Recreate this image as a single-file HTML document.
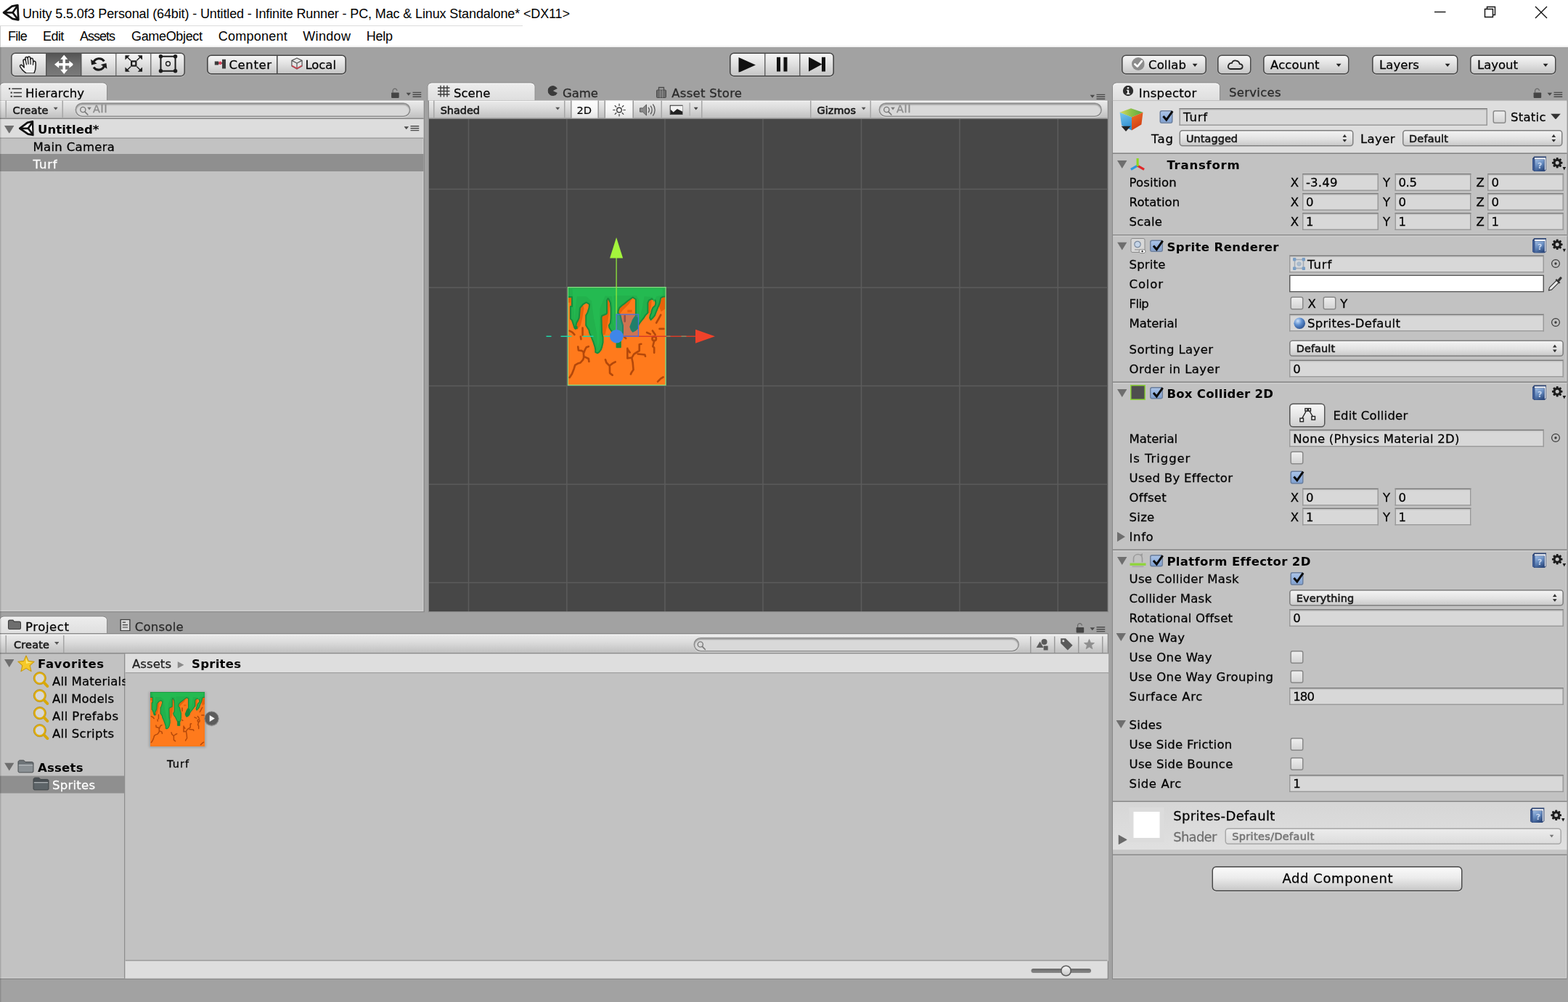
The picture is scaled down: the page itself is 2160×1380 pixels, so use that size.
<!DOCTYPE html>
<html lang="en"><head><meta charset="utf-8"><title>Unity 5.5.0f3 Personal (64bit) - Untitled - Infinite Runner</title>
<style>
html,body{margin:0;padding:0;background:#a2a2a2;overflow:hidden;}
body{width:2160px;height:1380px;position:relative;}
#chrome{position:absolute;left:0;top:0;width:2160px;height:65px;background:#fff;overflow:hidden;}
#u{position:absolute;left:0;top:65px;width:1440px;height:876.66px;transform:scale(1.5);transform-origin:0 0;background:#a2a2a2;overflow:hidden;}
.a{position:absolute;box-sizing:border-box;}
.t{font-family:"DejaVu Sans","Liberation Sans",sans-serif;font-size:11px;line-height:16px;color:#000;white-space:nowrap;-webkit-text-stroke:0.18px currentColor;}
.lb{font-family:"Liberation Sans",sans-serif;-webkit-text-stroke:0;}
.b{font-weight:bold;-webkit-text-stroke:0;}
.s{font-size:9.6px;color:#1a1a1a;-webkit-text-stroke:0.42px currentColor;}
.tab{background:linear-gradient(#ededed,#dedede);border-radius:3.5px 3.5px 0 0;box-shadow:inset 0 0.7px 0 rgba(255,255,255,0.8), 0 0 0 0.6px rgba(110,110,110,0.45);}
.ptb{background:linear-gradient(#ebebeb 0%,#dddddd 40%,#c0c0c0 100%);border-bottom:1px solid #8a8a8a;box-shadow:inset 0 1px 0 rgba(255,255,255,0.6);}
.fld{background:#d8d8d8;border:1px solid #9a9a9a;border-top-color:#7a7a7a;box-shadow:inset 0 1px 0 rgba(0,0,0,0.08);}
.dd{background:linear-gradient(#f4f4f4,#e2e2e2 55%,#cacaca);border:1px solid #808080;border-radius:3px;}
.cb{background:linear-gradient(#eeeeee,#d4d4d4);border:1px solid #8a8a8a;border-radius:2px;}
.cbc{background:linear-gradient(#a9c3e8,#7fa0d0);border:1px solid #6a7f9f;border-radius:2px;}

</style></head>
<body>
<div id="u">
<div class="a" style="left:0px;top:0px;width:1440px;height:877px;background:#a2a2a2;"></div>
<div class="a" style="left:10px;top:5px;width:160px;height:22px;border-radius:4px;border:1px solid #4d4d4d;overflow:hidden;background:linear-gradient(#f6f6f6,#e2e2e2 45%,#c6c6c6);box-shadow:0 0.7px 0 rgba(255,255,255,0.35);"><div class="a" style="left:31px;top:0;width:32px;height:100%;background:linear-gradient(#555,#6e6e6e 50%,#7a7a7a);"></div><div class="a" style="left:31px;top:0;width:1px;height:100%;background:#555;"></div><div class="a" style="left:63px;top:0;width:1px;height:100%;background:#555;"></div><div class="a" style="left:95px;top:0;width:1px;height:100%;background:#777;"></div><div class="a" style="left:127px;top:0;width:1px;height:100%;background:#777;"></div></div>
<svg class="a" style="left:17.33px;top:7.67px;" width="17.33" height="16.67" viewBox="0 0 23.5 24.6"><path d="M9.4 23.6 C6 21 2.6 17.4 1.2 14.6 C0.4 12.8 2.4 11.4 3.8 12.8 L6.6 15.8 L5.4 6.6 C5.2 4.4 8 3.8 8.6 6 L8.2 3.4 C8 1.2 11 0.8 11.4 3 L11.6 2.4 C11.8 0.4 14.8 0.6 15 2.8 L15.2 4.4 C15.6 2.6 18.4 3 18.6 5 L19 8 C19.4 6.6 22 7 22.2 8.8 C22.6 13.4 22.4 18.6 20 23.6 Z" fill="#f2f2f2" stroke="#1e1e1e" stroke-width="1.5" stroke-linejoin="round"/><path d="M8.6 6 L9.8 11.6 M11.5 3 L12.4 11 M15.1 4.4 L15.4 11.2 M18.9 8 L18.6 12" fill="none" stroke="#1e1e1e" stroke-width="1.3" stroke-linecap="round"/></svg>
<svg class="a" style="left:49.67px;top:7px;" width="17.67" height="17.67" viewBox="0 0 24 24"><g fill="#fff"><path d="M12 0 L16.6 5.6 H13.6 V10.4 H18.4 V7.4 L24 12 L18.4 16.6 V13.6 H13.6 V18.4 H16.6 L12 24 L7.4 18.4 H10.4 V13.6 H5.6 V16.6 L0 12 L5.6 7.4 V10.4 H10.4 V5.6 H7.4 Z"/></g></svg>
<svg class="a" style="left:83px;top:7.67px;" width="15.67" height="15" viewBox="0 0 24 22"><g fill="none" stroke="#1c1c1c" stroke-width="3.1"><path d="M4.2 9 A8.6 8.6 0 0 1 19.4 7"/><path d="M19.8 13 A8.6 8.6 0 0 1 4.6 15.4"/></g><path d="M0.6 4.4 L1.6 12.4 L9.4 10.2 Z" fill="#1c1c1c"/><path d="M23.4 17.6 L22.4 9.6 L14.6 11.8 Z" fill="#1c1c1c"/></svg>
<svg class="a" style="left:113.67px;top:7.33px;" width="17.67" height="16" viewBox="0 0 26 24.8"><g stroke="#1c1c1c" fill="none"><rect x="9.8" y="9.2" width="6.4" height="6.4" stroke-width="2.3"/><path d="M8.6 8 L3.6 3.2 M17.4 8 L22.4 3.2 M8.6 16.8 L3.6 21.6 M17.4 16.8 L22.4 21.6" stroke-width="1.5"/></g><g fill="#1c1c1c"><path d="M0.8 0.8 H7.4 L0.8 7.2 Z M25.2 0.8 V7.2 L18.6 0.8 Z M0.8 24 V17.6 L7.4 24 Z M25.2 24 H18.6 L25.2 17.6 Z"/></g></svg>
<svg class="a" style="left:145.33px;top:6.33px;" width="18.67" height="18.33" viewBox="0 0 26 26"><g stroke="#1c1c1c" fill="none"><rect x="3.5" y="3.5" width="19" height="19" stroke-width="1.9"/><circle cx="13" cy="13" r="2.8" stroke-width="1.3"/></g><g fill="#1c1c1c"><circle cx="3.5" cy="3.5" r="2.6"/><circle cx="22.5" cy="3.5" r="2.6"/><circle cx="3.5" cy="22.5" r="2.6"/><circle cx="22.5" cy="22.5" r="2.6"/></g></svg>
<div class="a" style="left:190px;top:7px;width:128px;height:18px;border-radius:4px;border:1px solid #444;background:linear-gradient(#f6f6f6,#e2e2e2 45%,#c6c6c6);box-shadow:0 0.7px 0 rgba(255,255,255,0.35);"><div class="a" style="left:63px;top:0;width:1px;height:100%;background:#444;"></div></div>
<svg class="a" style="left:197.33px;top:11.33px;" width="10.67" height="9.33" viewBox="0 0 16 14"><g fill="#3a3a3a"><rect x="0" y="3" width="5.5" height="5" /><rect x="10.5" y="0" width="5" height="13"/><rect x="5" y="4.6" width="6" height="1.6"/></g><rect x="6" y="3.2" width="3.6" height="4.2" fill="#e0405a"/></svg>
<div class="a t" style="left:210.33px;top:9px;letter-spacing:0.391px;">Center</div>
<svg class="a" style="left:266.67px;top:9.33px;" width="11.33" height="12" viewBox="0 0 18 18"><g fill="#e6e6e6" stroke="#555" stroke-width="1.3" stroke-linejoin="round"><path d="M9 1 L16.5 4.6 V12.6 L9 17 L1.5 12.6 V4.6 Z"/><path d="M1.5 4.6 L9 8.4 L16.5 4.6 M9 8.4 V17" fill="none"/></g><path d="M2.2 11.8 L9 15.6 L15.8 11.8 V13 L9 16.8 L2.2 13 Z" fill="#d0404e" stroke="#d0404e" stroke-width="0.8"/></svg>
<div class="a t" style="left:280.33px;top:9px;letter-spacing:-0.046px;">Local</div>
<div class="a" style="left:670px;top:5px;width:96px;height:22px;border-radius:4px;border:1px solid #444;background:linear-gradient(#f6f6f6,#e2e2e2 45%,#c6c6c6);box-shadow:0 0.7px 0 rgba(255,255,255,0.35);"><div class="a" style="left:31px;top:0;width:1px;height:100%;background:#666;"></div><div class="a" style="left:63px;top:0;width:1px;height:100%;background:#666;"></div></div>
<svg class="a" style="left:678px;top:8.67px;" width="16.67" height="14.67" viewBox="0 0 24 21"><path d="M0.5 0.5 L23 10.5 L0.5 20.5 Z" fill="#111"/></svg>
<svg class="a" style="left:713.33px;top:9.33px;" width="10.67" height="13.33" viewBox="0 0 16 20"><rect x="0.5" y="0" width="5" height="20" fill="#111"/><rect x="10" y="0" width="5" height="20" fill="#111"/></svg>
<svg class="a" style="left:742px;top:9.33px;" width="17.33" height="13.33" viewBox="0 0 25 20"><path d="M0.5 0 L19 10 L0.5 20 Z" fill="#111"/><rect x="18.5" y="0" width="5" height="20" fill="#111"/></svg>
<div class="a" style="left:1030px;top:7px;width:78px;height:18px;border-radius:4px;border:1px solid #4a4a4a;background:linear-gradient(#f6f6f6,#e2e2e2 45%,#c6c6c6);box-shadow:0 0.7px 0 rgba(255,255,255,0.35);"></div>
<div class="a t" style="left:1054.67px;top:9px;letter-spacing:0.086px;">Collab</div>
<svg class="a" style="left:1095.27px;top:14.87px;" width="4.8" height="2.93" viewBox="0 0 7.2 4.4"><path d="M0 0 H7.2 L3.6 4.4 Z" fill="#222"/></svg>
<svg class="a" style="left:1038.67px;top:9.33px;" width="12.67" height="12.67" viewBox="0 0 19 19"><circle cx="9.5" cy="9.5" r="9" fill="#8c8c8c"/><path d="M4.8 9.8 L8.3 13.2 L14.4 5.6" fill="none" stroke="#fff" stroke-width="2.6" stroke-linecap="round" stroke-linejoin="round"/></svg>
<div class="a" style="left:1118px;top:7px;width:31px;height:18px;border-radius:4px;border:1px solid #4a4a4a;background:linear-gradient(#f6f6f6,#e2e2e2 45%,#c6c6c6);box-shadow:0 0.7px 0 rgba(255,255,255,0.35);"></div>
<svg class="a" style="left:1126px;top:11px;" width="16" height="10" viewBox="0 0 24 15"><path d="M6 13.5 H18.5 C24 13.5 24 6.8 18.6 6.6 C18 1.2 9.6 0.2 8 5.4 C3.5 4.2 0 13 6 13.5 Z" fill="none" stroke="#222" stroke-width="1.8" stroke-linejoin="round"/></svg>
<div class="a" style="left:1160px;top:7px;width:79px;height:18px;border-radius:4px;border:1px solid #4a4a4a;background:linear-gradient(#f6f6f6,#e2e2e2 45%,#c6c6c6);box-shadow:0 0.7px 0 rgba(255,255,255,0.35);"></div>
<div class="a t" style="left:1166.67px;top:9px;letter-spacing:0.098px;">Account</div>
<svg class="a" style="left:1226.93px;top:14.87px;" width="4.8" height="2.93" viewBox="0 0 7.2 4.4"><path d="M0 0 H7.2 L3.6 4.4 Z" fill="#222"/></svg>
<div class="a" style="left:1260px;top:7px;width:79px;height:18px;border-radius:4px;border:1px solid #4a4a4a;background:linear-gradient(#f6f6f6,#e2e2e2 45%,#c6c6c6);box-shadow:0 0.7px 0 rgba(255,255,255,0.35);"></div>
<div class="a t" style="left:1266.67px;top:9px;letter-spacing:0.051px;">Layers</div>
<svg class="a" style="left:1326.93px;top:14.87px;" width="4.8" height="2.93" viewBox="0 0 7.2 4.4"><path d="M0 0 H7.2 L3.6 4.4 Z" fill="#222"/></svg>
<div class="a" style="left:1350px;top:7px;width:79px;height:18px;border-radius:4px;border:1px solid #4a4a4a;background:linear-gradient(#f6f6f6,#e2e2e2 45%,#c6c6c6);box-shadow:0 0.7px 0 rgba(255,255,255,0.35);"></div>
<div class="a t" style="left:1356.67px;top:9px;letter-spacing:-0.013px;">Layout</div>
<svg class="a" style="left:1416.93px;top:14.87px;" width="4.8" height="2.93" viewBox="0 0 7.2 4.4"><path d="M0 0 H7.2 L3.6 4.4 Z" fill="#222"/></svg>
<div class="a tab" style="left:0px;top:32.8px;width:98px;height:15.87px;"></div>
<svg class="a" style="left:8px;top:36.67px;" width="12" height="9.33" viewBox="0 0 18 14"><g fill="#3c3c3c"><rect x="0" y="0.6" width="2.2" height="2.2"/><rect x="4.4" y="1" width="13.6" height="1.5"/><rect x="2.6" y="6" width="2.2" height="2.2"/><rect x="6.6" y="6.4" width="11.4" height="1.5"/><rect x="2.6" y="11.2" width="2.2" height="2.2"/><rect x="6.6" y="11.6" width="11.4" height="1.5"/></g></svg>
<div class="a t" style="left:23.33px;top:35px;letter-spacing:0.105px;">Hierarchy</div>
<svg class="a" style="left:359.33px;top:37.33px;" width="8.67" height="10" viewBox="0 0 13 15"><path d="M2.6 7 V4.6 C2.6 0.6 8.4 0.6 8.4 4.6" fill="none" stroke="#6a6a6a" stroke-width="1.3"/><rect x="0.6" y="7" width="10.6" height="7.4" rx="0.8" fill="#454545"/></svg>
<svg class="a" style="left:372.53px;top:41.47px;" width="14" height="5.33" viewBox="0 0 21 8"><path d="M0 1.2 H6.6 L3.3 5.2 Z" fill="#4a4a4a"/><g fill="#4a4a4a"><rect x="9" y="0" width="12" height="1.5"/><rect x="9" y="3" width="12" height="1.5"/><rect x="9" y="6" width="12" height="1.5"/></g></svg>
<div class="a" style="left:-1px;top:48.67px;width:390.67px;height:470px;background:#c2c2c2;border:1px solid #8a8a8a;box-shadow:inset -1px -1px 0 rgba(255,255,255,0.22);"></div>
<div class="a ptb" style="left:0px;top:49.47px;width:388.93px;height:16.67px;"></div>
<div class="a" style="left:5px;top:49px;width:1px;height:16px;background:#a6a6a6;"></div>
<div class="a" style="left:57px;top:49px;width:1px;height:16px;background:#a6a6a6;"></div>
<div class="a t s" style="left:11.67px;top:50px;letter-spacing:0.154px;font-size:9.6px;">Create</div>
<svg class="a" style="left:49.17px;top:55.33px;" width="4.33" height="2.67" viewBox="0 0 6.5 4"><path d="M0 0 H6.5 L3.25 4 Z" fill="#555"/></svg>
<div class="a" style="left:69px;top:51px;width:308px;height:13px;border-radius:20px;background:#d9d9d9;border:0.9px solid #8c8c8c;box-shadow:inset 0 1px 1px rgba(0,0,0,0.28), 0 0.7px 0 rgba(255,255,255,0.5);"></div>
<svg class="a" style="left:72.67px;top:53.67px;" width="9.33" height="9.33" viewBox="0 0 14 14"><circle cx="4.8" cy="5" r="3.6" fill="none" stroke="#7a7a7a" stroke-width="1.4"/><path d="M7.4 7.8 L11.4 12" stroke="#7a7a7a" stroke-width="1.7" stroke-linecap="round"/></svg>
<svg class="a" style="left:80.33px;top:55.47px;" width="4" height="2.67" viewBox="0 0 6 4"><path d="M0 0 H6 L3.0 4 Z" fill="#7a7a7a"/></svg>
<div class="a t" style="left:85.33px;top:49px;letter-spacing:0.515px;font-size:9.6px;color:#8c8c8c;-webkit-text-stroke:0.25px #8c8c8c;">All</div>
<div class="a" style="left:0px;top:66px;width:389px;height:18px;background:#dddddd;border-bottom:1px solid #a0a0a0;"></div>
<svg class="a" style="left:4.33px;top:71.67px;" width="9" height="7.33" viewBox="0 0 13.5 11"><path d="M0 0 H13.5 L6.75 11 Z" fill="#6e6e6e"/></svg>
<svg class="a" style="left:16.67px;top:67px;" width="14.67" height="14.67" viewBox="0 0 24 24"><g fill="none" stroke="#111" stroke-width="3" stroke-linejoin="round" stroke-linecap="round"><path d="M2 12.3 L13.5 3.6 L21.3 2 L22.3 22.3 L14.3 20.8 Z" fill="#fff"/><path d="M2.5 12.3 H14.5 M14.5 12.3 L21 3 M14.5 12.3 L21.6 21.6"/></g></svg>
<div class="a t b" style="left:34.67px;top:68px;letter-spacing:0.053px;">Untitled*</div>
<svg class="a" style="left:370.67px;top:72px;" width="14" height="5.33" viewBox="0 0 21 8"><path d="M0 1.2 H6.6 L3.3 5.2 Z" fill="#4a4a4a"/><g fill="#4a4a4a"><rect x="9" y="0" width="12" height="1.5"/><rect x="9" y="3" width="12" height="1.5"/><rect x="9" y="6" width="12" height="1.5"/></g></svg>
<div class="a t" style="left:30.33px;top:84px;letter-spacing:0.207px;">Main Camera</div>
<div class="a" style="left:0px;top:98px;width:389px;height:16px;background:#8f8f8f;"></div>
<div class="a t" style="left:30.39px;top:100px;letter-spacing:0.542px;color:#fff;">Turf</div>
<div class="a tab" style="left:392.8px;top:32.8px;width:98.53px;height:15.87px;"></div>
<svg class="a" style="left:402px;top:35.33px;" width="11.33" height="10.67" viewBox="0 0 17 16"><g stroke="#3c3c3c" stroke-width="1.4" fill="none"><path d="M4 0 V16 M8.5 0 V16 M13 0 V16 M0 3.5 H17 M0 8 H17 M0 12.5 H17"/></g></svg>
<div class="a t" style="left:416.67px;top:35px;letter-spacing:0.029px;">Scene</div>
<svg class="a" style="left:502.67px;top:35.33px;" width="9.33" height="10" viewBox="0 0 14 15"><path d="M7.2 7.5 L13.4 4.6 A7 7 0 1 0 13.4 10.4 Z" fill="#3a3a3a"/></svg>
<div class="a t" style="left:516.67px;top:35px;letter-spacing:-0.029px;color:#2a2a2a;">Game</div>
<svg class="a" style="left:602px;top:34.67px;" width="11.33" height="12" viewBox="0 0 17 18"><g fill="#6c6c6c" stroke="#4a4a4a" stroke-width="1"><rect x="1.5" y="6.5" width="13" height="10.5" rx="1"/><path d="M4.5 6.5 V3 H11.5 V6.5" fill="none" stroke-width="1.3"/></g><path d="M6.4 6.5 V17 M9.6 6.5 V17" stroke="#9a9a9a" stroke-width="0.8"/></svg>
<div class="a t" style="left:616.87px;top:35px;letter-spacing:0.182px;color:#2a2a2a;">Asset Store</div>
<svg class="a" style="left:1000.67px;top:43px;" width="14" height="5.33" viewBox="0 0 21 8"><path d="M0 1.2 H6.6 L3.3 5.2 Z" fill="#4a4a4a"/><g fill="#4a4a4a"><rect x="9" y="0" width="12" height="1.5"/><rect x="9" y="3" width="12" height="1.5"/><rect x="9" y="6" width="12" height="1.5"/></g></svg>
<div class="a" style="left:392.87px;top:48.67px;width:625.33px;height:470px;background:#c2c2c2;border:1px solid #8a8a8a;box-shadow:inset -1px -1px 0 rgba(255,255,255,0.22);"></div>
<div class="a ptb" style="left:393.6px;top:49.47px;width:623.87px;height:16.67px;"></div>
<div class="a" style="left:398px;top:49px;width:1px;height:16px;background:#a6a6a6;"></div>
<div class="a" style="left:518px;top:49px;width:1px;height:16px;background:#a6a6a6;"></div>
<div class="a t s" style="left:404.47px;top:50px;letter-spacing:0.011px;font-size:9.6px;">Shaded</div>
<svg class="a" style="left:510.17px;top:55px;" width="4.33" height="2.67" viewBox="0 0 6.5 4"><path d="M0 0 H6.5 L3.25 4 Z" fill="#555"/></svg>
<div class="a" style="left:524px;top:49px;width:26px;height:16px;background:linear-gradient(#fdfdfd,#f4f4f4 60%,#e4e4e4);border-left:1px solid #9a9a9a;border-right:1px solid #9a9a9a;"></div>
<div class="a t" style="left:529.67px;top:50px;letter-spacing:-0.127px;font-size:9.8px;-webkit-text-stroke:0.1px #000;">2D</div>
<div class="a" style="left:555px;top:49px;width:27px;height:16px;background:linear-gradient(#fdfdfd,#f4f4f4 60%,#e4e4e4);border-left:1px solid #9a9a9a;border-right:1px solid #9a9a9a;"></div>
<svg class="a" style="left:562px;top:50.67px;" width="13.33" height="13.33" viewBox="0 0 20 20"><g stroke="#3a3a3a" stroke-width="1.2" fill="none"><circle cx="10" cy="10" r="3.3" stroke-width="1.4"/><path d="M10 1.2 V4.6 M10 15.4 V18.8 M1.2 10 H4.6 M15.4 10 H18.8 M3.8 3.8 L6.2 6.2 M13.8 13.8 L16.2 16.2 M16.2 3.8 L13.8 6.2 M6.2 13.8 L3.8 16.2"/></g></svg>
<div class="a" style="left:607px;top:49px;width:1px;height:16px;background:#a6a6a6;"></div>
<svg class="a" style="left:586.67px;top:50.67px;" width="15.33" height="13.33" viewBox="0 0 23 20"><path d="M1 7.4 H5 L10 2.6 V17.4 L5 12.6 H1 Z" fill="#8a8a8a" stroke="#555" stroke-width="1"/><g fill="none" stroke="#5a5a5a" stroke-width="1.3"><path d="M12.5 6.5 C14.2 8.5 14.2 11.5 12.5 13.5"/><path d="M15.6 4.2 C18.4 7.4 18.4 12.6 15.6 15.8"/><path d="M18.8 2 C22.6 6.4 22.6 13.6 18.8 18"/></g></svg>
<svg class="a" style="left:614.67px;top:52.67px;" width="12.67" height="9.33" viewBox="0 0 19 14"><rect x="0.6" y="0.6" width="17.8" height="12.8" fill="#f2f2f2" stroke="#222" stroke-width="1.2"/><path d="M1.2 13 V6.2 L5.2 10 L10.4 5.6 L17.8 9.2 V13 Z" fill="#222"/></svg>
<div class="a" style="left:633px;top:51px;width:1px;height:12px;background:#b0b0b0;"></div>
<svg class="a" style="left:636.5px;top:55px;" width="4.33" height="2.67" viewBox="0 0 6.5 4"><path d="M0 0 H6.5 L3.25 4 Z" fill="#444"/></svg>
<div class="a" style="left:644px;top:49px;width:1px;height:16px;background:#a6a6a6;"></div>
<div class="a" style="left:744px;top:49px;width:1px;height:16px;background:#a6a6a6;"></div>
<div class="a" style="left:799px;top:49px;width:1px;height:16px;background:#a6a6a6;"></div>
<div class="a t s" style="left:750.33px;top:50px;letter-spacing:0.058px;font-size:9.6px;">Gizmos</div>
<svg class="a" style="left:790.83px;top:55px;" width="4.33" height="2.67" viewBox="0 0 6.5 4"><path d="M0 0 H6.5 L3.25 4 Z" fill="#555"/></svg>
<div class="a" style="left:807px;top:51px;width:205px;height:13px;border-radius:20px;background:#d9d9d9;border:0.9px solid #8c8c8c;box-shadow:inset 0 1px 1px rgba(0,0,0,0.28), 0 0.7px 0 rgba(255,255,255,0.5);"></div>
<svg class="a" style="left:810.67px;top:53.67px;" width="9.33" height="9.33" viewBox="0 0 14 14"><circle cx="4.8" cy="5" r="3.6" fill="none" stroke="#7a7a7a" stroke-width="1.4"/><path d="M7.4 7.8 L11.4 12" stroke="#7a7a7a" stroke-width="1.7" stroke-linecap="round"/></svg>
<svg class="a" style="left:818.33px;top:55.47px;" width="4" height="2.67" viewBox="0 0 6 4"><path d="M0 0 H6 L3.0 4 Z" fill="#7a7a7a"/></svg>
<div class="a t" style="left:823.33px;top:49px;letter-spacing:0.515px;font-size:9.6px;color:#8c8c8c;-webkit-text-stroke:0.25px #8c8c8c;">All</div>
<svg class="a" style="left:394px;top:66px;background:#474747;" width="623.47" height="451.67" viewBox="0 0 935.2 677.5"><rect x="0" y="0" width="940" height="680" fill="#474747"/><rect x="53.75" y="0" width="1.5" height="680" fill="#5c5c5c"/><rect x="189.05" y="0" width="1.5" height="680" fill="#5c5c5c"/><rect x="324.25" y="0" width="1.5" height="680" fill="#5c5c5c"/><rect x="459.25" y="0" width="1.5" height="680" fill="#5c5c5c"/><rect x="594.75" y="0" width="1.5" height="680" fill="#5c5c5c"/><rect x="730.25" y="0" width="1.5" height="680" fill="#5c5c5c"/><rect x="865.55" y="0" width="1.5" height="680" fill="#5c5c5c"/><rect x="0" y="95.75" width="940" height="1.5" fill="#5c5c5c"/><rect x="0" y="231.25" width="940" height="1.5" fill="#5c5c5c"/><rect x="0" y="366.75" width="940" height="1.5" fill="#5c5c5c"/><rect x="0" y="502.25" width="940" height="1.5" fill="#5c5c5c"/><rect x="0" y="637.75" width="940" height="1.5" fill="#5c5c5c"/></svg>
<svg class="a" style="left:521.07px;top:220.4px;" width="90.8" height="90.8" viewBox="0 0 136.2 136.2"><svg x="0.6" y="0.6" width="134.9" height="134.9" viewBox="0 0 64 64"><g>
<rect x="0" y="0" width="64" height="64" fill="#ff7a1c"/>
<path d="M22.3 18.7 L25.3 17.4 L25.6 8.6 L26.3 7.3 L26.9 8 L27.4 12 L26.6 20 L25.6 26 L24.4 31 L22.3 31 Z M8 13.5 L10 11.2 L10.6 14 L9.6 20 L8.4 25 L6 28 L5.1 27.2 L5.4 24.9 L6.7 21.6 L7.4 20 L7.7 16.7 Z M52.3 10.2 L53 8.6 L54.9 7.6 L54.6 12 L53.6 17 L52.3 16.7 Z M0 6.3 H2.8 V12.5 H1.8 V10 H0 Z M33.7 13.5 L39.6 8.6 L42.5 6.6 L40 11 L36 15 L34 17.6 L32.8 16.7 Z M39 14.8 H42 V16.4 H39 Z M62 6.3 L64 6 V14 L61 16 L59.5 11.9 L60.1 10.2 Z" fill="#e8620a"/>
<path d="M0 0 H64 V6 L62 6.3 L60.8 7 L60.1 10.2 L59.5 11.9 L58.8 13.5 L58.2 15.1 L57.5 16.7 L56.9 18.4 L55.6 20 L54.3 21.3 L53.6 20 L53.9 18.4 L54.6 16.7 L54.9 15.1 L55.6 13.5 L57.2 11.9 L57.5 10.2 L57.2 8.6 L54.9 7.6 L53 8.6 L52.3 10.2 L52.3 16.7 L50.7 18.4 L49.7 20 L48.4 21.6 L47.1 23.3 L46.1 24.9 L45.8 26.5 L44.2 28.1 L42.5 29 L41.6 27.8 L40.9 25.9 L41.9 23.3 L42.5 21.6 L43.5 20 L44.5 18.7 L44.5 7.9 L42.5 6.6 L39.6 8.6 L37.7 10.2 L35.4 11.9 L33.7 13.5 L33.1 15.1 L32.8 16.7 L34.4 18.4 L35 21.6 L36 24.9 L36 29.8 L35.5 33 L34.5 35 L34.5 39.2 L32 39.2 L32 35 L30.5 32 L29.5 29.8 L28.2 28.1 L27.2 26.5 L26.9 24.9 L27.9 23.3 L28.2 20 L28.2 13.5 L27.9 10.2 L26.9 8 L26.3 7.3 L25.6 8.6 L25.6 16.7 L25.3 17.4 L22.3 18.7 L22 20 L22.3 29.8 L23 32.7 L23 36 L22.3 39.2 L21.7 40.8 L20.4 42.5 L19.4 43.1 L18.1 42.5 L18.1 40.8 L17.8 39.2 L16.8 36 L15.5 32.7 L14.2 29.8 L13.9 28.1 L12.9 26.5 L11.9 24.9 L11.9 18.4 L12.9 16.7 L13.9 13.5 L14.2 11.2 L12.2 9.9 L10 11.2 L8 13.5 L7.7 16.7 L7.4 20 L6.7 21.6 L5.7 23.3 L5.4 24.9 L5.1 27.2 L4.4 26.5 L3.9 24.9 L2.8 21.6 L1.8 20.6 L1.8 12.5 L2.8 12.5 L2.8 6.3 L0 6.3 Z" fill="#22b14c" stroke="#178c3c" stroke-width="0.95" stroke-linejoin="round"/>
<path d="M3 1 H62 V5 L58 6 L56 10 L55.6 6.4 L50 6 L48.6 14 L47 20 L46.4 8 L45 5.4 L30 5.4 L30.4 22 L31.4 30 L29.6 22 L29 6 L24.4 5.6 L21 14 L20.6 36 L19.4 40 L19 30 L17 20 L15.6 9 L12 6 L6 6 L5 14 L4.6 22 L3.8 12 Z" fill="#25bd53" opacity="0.75"/>
<path d="M41.6 27.8 L40.9 25.9 L41.9 23.3 L43.5 20 L45 19 L46.4 20.6 L46.1 24.9 L45.8 26.5 L44.2 28.1 L42.5 29 Z M32 34 H34.5 V39.2 H32 Z M4.4 25.4 H6.4 V27.2 H4.4 Z" fill="#138a3e"/>
<g fill="none" stroke="#b4480a" stroke-width="1.25" stroke-linejoin="round" stroke-linecap="round">
<path d="M1.2 59 L2.8 56.5 L4.1 53.2 L4.8 50.9 L6.4 49.9 L8.3 49.3 L10 47.3 L10.6 45.4 L10.3 43.4 L11.3 40.8 L12.2 39.2 L13.6 38.7 M10.4 45.2 L13.6 46.7 L13.9 48.6 M6.7 38.9 L7 41.2 L9.3 41.5 L10.4 42.6"/>
<path d="M24.6 47.3 L25.3 49.3 L27.3 51.3 L29.5 49.6 L31.1 48.8 M27.4 51.3 L27.5 56.1 L29.2 57.4"/>
<path d="M39 39.9 L39 46.4 L41.9 46 L43.2 43.8 L45.1 42.5 L46.8 41.5 L46.8 37.3 L48 37.1 M39.2 40.6 L40.6 42.6 M45.8 43.6 L50.4 44.1 L50.7 45.1 M41.9 46.4 L42.5 49.3 L42.9 53.9 L41.6 55.8 L41.2 56.8"/>
<path d="M56.5 35 L55.6 38.6 L56.5 39.5 L56.5 42.8"/><circle cx="56.5" cy="33.6" r="1.3"/>
<path d="M58.8 61.7 L60.8 59.7 L62.4 58.7"/>
<path d="M8.4 32.2 L8.7 34 M60.8 18 L59.4 20.6 L57.9 23.3 M60 27.2 H62.7 M51.7 29.6 L54 30.6 M55.4 28.4 L57.2 31 M1.2 28.5 L3 29.4 L4.4 31 M9.7 26.5 V31.4 M37.3 18.7 V22.3 M37 32.6 L38 33.4"/>
</g>
</g></svg><rect x="0.7" y="0.7" width="134.8" height="134.8" fill="none" stroke="#84dc80" stroke-width="1.4"/></svg>
<svg class="a" style="left:453.33px;top:143.33px;" width="266.67" height="200" viewBox="0 0 400 300">
<g>
<path d="M73 183.7 H80 M93 183.7 H108 M123 183.7 H138 M153 183.7 H166" stroke="#1fd6a8" stroke-width="1.6" fill="none"/>
<path d="M169.6 183.7 V75" stroke="#8fe83c" stroke-width="1.3"/>
<path d="M169.6 47.5 L178.6 76 H160.6 Z" fill="#a4f53c"/>
<path d="M169.6 183.7 H280" stroke="#d83c28" stroke-width="1.5"/><path d="M239 183.7 H244 M259 183.7 H266" stroke="#7a9a70" stroke-width="1.5" opacity="0.8"/>
<path d="M305.5 183.7 L278.5 174.2 V193.2 Z" fill="#f0422a"/>
<rect x="169.6" y="153.5" width="30.4" height="30.2" fill="rgba(70,100,230,0.27)" stroke="#4a6fe0" stroke-width="1.3"/>
<circle cx="169.8" cy="183.7" r="9.3" fill="#3f86e8"/>
</g></svg>
<div class="a tab" style="left:0px;top:523.33px;width:98px;height:15.33px;"></div>
<svg class="a" style="left:7.33px;top:525.33px;" width="12.67" height="10" viewBox="0 0 19 15"><path d="M1 3.6 C1 2.4 1.8 1.6 3 1.6 H7.4 L9 3.6 H16 C17.2 3.6 18 4.4 18 5.4 V12.4 C18 13.4 17.2 14 16.2 14 H2.8 C1.8 14 1 13.4 1 12.4 Z" fill="#6e6e6e" stroke="#3e3e3e" stroke-width="1.1"/></svg>
<div class="a t" style="left:23.33px;top:525px;letter-spacing:0.392px;">Project</div>
<svg class="a" style="left:110px;top:524.67px;" width="10" height="11.33" viewBox="0 0 14.2 16.8"><rect x="0.8" y="0.8" width="12.6" height="15.2" fill="#d8d8d8" stroke="#3c3c3c" stroke-width="1.3"/><path d="M3.4 4.6 H7.6 M3.4 8 H10.6 M3.4 11.4 H10.6" stroke="#3c3c3c" stroke-width="1.1"/></svg>
<div class="a t" style="left:123.8px;top:525px;letter-spacing:0.166px;color:#2a2a2a;">Console</div>
<svg class="a" style="left:988px;top:528px;" width="8.67" height="10" viewBox="0 0 13 15"><path d="M2.6 7 V4.6 C2.6 0.6 8.4 0.6 8.4 4.6" fill="none" stroke="#6a6a6a" stroke-width="1.3"/><rect x="0.6" y="7" width="10.6" height="7.4" rx="0.8" fill="#454545"/></svg>
<svg class="a" style="left:1001.2px;top:532.13px;" width="14" height="5.33" viewBox="0 0 21 8"><path d="M0 1.2 H6.6 L3.3 5.2 Z" fill="#4a4a4a"/><g fill="#4a4a4a"><rect x="9" y="0" width="12" height="1.5"/><rect x="9" y="3" width="12" height="1.5"/><rect x="9" y="6" width="12" height="1.5"/></g></svg>
<div class="a" style="left:-1px;top:538.4px;width:1019.2px;height:317.27px;background:#c2c2c2;border:1px solid #8a8a8a;box-shadow:inset -1px -1px 0 rgba(255,255,255,0.22);"></div>
<div class="a ptb" style="left:0px;top:539.33px;width:1017.47px;height:17.33px;"></div>
<div class="a" style="left:5px;top:540px;width:1px;height:16px;background:#a6a6a6;"></div>
<div class="a" style="left:58px;top:540px;width:1px;height:16px;background:#a6a6a6;"></div>
<div class="a t s" style="left:12.67px;top:541px;letter-spacing:0.154px;font-size:9.6px;">Create</div>
<svg class="a" style="left:50.17px;top:546px;" width="4.33" height="2.67" viewBox="0 0 6.5 4"><path d="M0 0 H6.5 L3.25 4 Z" fill="#555"/></svg>
<div class="a" style="left:637px;top:542px;width:299px;height:13px;border-radius:20px;background:#d9d9d9;border:0.9px solid #8c8c8c;box-shadow:inset 0 1px 1px rgba(0,0,0,0.28), 0 0.7px 0 rgba(255,255,255,0.5);"></div>
<svg class="a" style="left:640px;top:544.67px;" width="9.33" height="9.33" viewBox="0 0 14 14"><circle cx="4.8" cy="5" r="3.6" fill="none" stroke="#7a7a7a" stroke-width="1.4"/><path d="M7.4 7.8 L11.4 12" stroke="#7a7a7a" stroke-width="1.7" stroke-linecap="round"/></svg>
<div class="a" style="left:946px;top:541px;width:1px;height:15px;background:#9c9c9c;"></div>
<div class="a" style="left:968px;top:541px;width:1px;height:15px;background:#9c9c9c;"></div>
<div class="a" style="left:990px;top:541px;width:1px;height:15px;background:#9c9c9c;"></div>
<div class="a" style="left:1012px;top:541px;width:1px;height:15px;background:#9c9c9c;"></div>
<svg class="a" style="left:951.33px;top:542.67px;" width="12.67" height="11.33" viewBox="0 0 18 17"><g fill="#5a5a5a"><circle cx="11.5" cy="4.6" r="4"/><path d="M0.6 12.4 L5.6 4 L10.6 12.4 Z"/><rect x="10.6" y="10" width="6" height="6"/></g></svg>
<svg class="a" style="left:972.67px;top:542px;" width="13.33" height="12.67" viewBox="0 0 19 19"><path d="M1.2 1.2 H8 L17.6 10.8 L10.8 17.6 L1.2 8 Z" fill="#5a5a5a"/><circle cx="4.8" cy="4.8" r="1.5" fill="#dcdcdc"/></svg>
<svg class="a" style="left:995.33px;top:542.67px;" width="10.67" height="10" viewBox="0 0 22 20"><path d="M11 1 L13.7 7.6 L20.6 8 L15.2 12.4 L17 19.2 L11 15.4 L5 19.2 L6.8 12.4 L1.4 8 L8.3 7.6 Z" fill="#8e8e8e" stroke="#8e8e8e" stroke-width="1.2" stroke-linejoin="round"/></svg>
<div class="a" style="left:114px;top:557px;width:1px;height:298px;background:#8e8e8e;"></div>
<div class="a" style="left:115px;top:557px;width:903px;height:18px;background:#dedede;border-bottom:1px solid #9e9e9e;"></div>
<div class="a t" style="left:121.33px;top:559px;letter-spacing:0.039px;color:#222;">Assets</div>
<svg class="a" style="left:163.33px;top:564.33px;" width="6" height="6.33" viewBox="0 0 9 9.5"><path d="M0 0 L9 4.75 L0 9.5 Z" fill="#8a8a8a"/></svg>
<div class="a t b" style="left:176px;top:559px;letter-spacing:0.181px;">Sprites</div>
<svg class="a" style="left:4.33px;top:562.33px;" width="9" height="7.33" viewBox="0 0 13.5 11"><path d="M0 0 H13.5 L6.75 11 Z" fill="#6e6e6e"/></svg>
<svg class="a" style="left:16.33px;top:558px;" width="16" height="16" viewBox="0 0 24 24"><path d="M12 1 L15.2 8.4 L23.2 9.2 L17.2 14.6 L19 22.6 L12 18.4 L5 22.6 L6.8 14.6 L0.8 9.2 L8.8 8.4 Z" fill="#f6c928" stroke="#c99a10" stroke-width="1.1" stroke-linejoin="round"/><path d="M12 4 L14 9.4 L19.6 10 L12 12 Z" fill="#fde97a"/></svg>
<div class="a t b" style="left:34.67px;top:559px;letter-spacing:0.399px;">Favorites</div>
<svg class="a" style="left:30.33px;top:573px;" width="16" height="16.67" viewBox="0 0 24 25"><circle cx="9.8" cy="9.6" r="7.4" fill="#e9e9e9" fill-opacity="0.55" stroke="#e0b010" stroke-width="2.6"/><circle cx="9.8" cy="9.6" r="8.6" fill="none" stroke="#a87c08" stroke-width="0.6"/><path d="M15.4 15.4 L20.4 20.6" stroke="#d8a808" stroke-width="3.8" stroke-linecap="round"/></svg>
<div class="a t" style="left:48px;top:575px;letter-spacing:0.147px;">All Materials</div>
<svg class="a" style="left:30.33px;top:589px;" width="16" height="16.67" viewBox="0 0 24 25"><circle cx="9.8" cy="9.6" r="7.4" fill="#e9e9e9" fill-opacity="0.55" stroke="#e0b010" stroke-width="2.6"/><circle cx="9.8" cy="9.6" r="8.6" fill="none" stroke="#a87c08" stroke-width="0.6"/><path d="M15.4 15.4 L20.4 20.6" stroke="#d8a808" stroke-width="3.8" stroke-linecap="round"/></svg>
<div class="a t" style="left:48px;top:591px;letter-spacing:0.087px;">All Models</div>
<svg class="a" style="left:30.33px;top:605px;" width="16" height="16.67" viewBox="0 0 24 25"><circle cx="9.8" cy="9.6" r="7.4" fill="#e9e9e9" fill-opacity="0.55" stroke="#e0b010" stroke-width="2.6"/><circle cx="9.8" cy="9.6" r="8.6" fill="none" stroke="#a87c08" stroke-width="0.6"/><path d="M15.4 15.4 L20.4 20.6" stroke="#d8a808" stroke-width="3.8" stroke-linecap="round"/></svg>
<div class="a t" style="left:48px;top:607px;letter-spacing:0.272px;">All Prefabs</div>
<svg class="a" style="left:30.33px;top:621px;" width="16" height="16.67" viewBox="0 0 24 25"><circle cx="9.8" cy="9.6" r="7.4" fill="#e9e9e9" fill-opacity="0.55" stroke="#e0b010" stroke-width="2.6"/><circle cx="9.8" cy="9.6" r="8.6" fill="none" stroke="#a87c08" stroke-width="0.6"/><path d="M15.4 15.4 L20.4 20.6" stroke="#d8a808" stroke-width="3.8" stroke-linecap="round"/></svg>
<div class="a t" style="left:48px;top:623px;letter-spacing:0.189px;">All Scripts</div>
<div class="a" style="left:115px;top:575px;width:903px;height:264px;background:#c2c2c2;"></div>
<svg class="a" style="left:4.33px;top:657.33px;" width="9" height="7.33" viewBox="0 0 13.5 11"><path d="M0 0 H13.5 L6.75 11 Z" fill="#6e6e6e"/></svg>
<svg class="a" style="left:16.33px;top:654px;" width="15.33" height="12.67" viewBox="0 0 22 18"><path d="M1 3.4 C1 2 2 1 3.4 1 H8.4 L10.4 3.2 H19 C20.4 3.2 21 4 21 5 V15.4 C21 16.6 20.2 17 19 17 H3 C1.8 17 1 16.4 1 15.2 Z" fill="#6f7579" stroke="#3c4043" stroke-width="0.9"/><path d="M1.6 7.2 H20.4 V15.2 C20.4 16 19.8 16.5 19 16.5 H3 C2.2 16.5 1.6 16 1.6 15.2 Z" fill="#8b9195"/><path d="M1.8 7.4 H20.2" stroke="#c9cdd0" stroke-width="1"/></svg>
<div class="a t b" style="left:34.67px;top:654px;letter-spacing:0.160px;">Assets</div>
<div class="a" style="left:0px;top:669px;width:114px;height:16px;background:#8f8f8f;"></div>
<svg class="a" style="left:30.33px;top:670px;" width="15.33" height="12.67" viewBox="0 0 22 18"><path d="M1 3.4 C1 2 2 1 3.4 1 H8.4 L10.4 3.2 H19 C20.4 3.2 21 4 21 5 V15.4 C21 16.6 20.2 17 19 17 H3 C1.8 17 1 16.4 1 15.2 Z" fill="#4a5054" stroke="#3c4043" stroke-width="0.9"/><path d="M1.6 7.2 H20.4 V15.2 C20.4 16 19.8 16.5 19 16.5 H3 C2.2 16.5 1.6 16 1.6 15.2 Z" fill="#5d6468"/><path d="M1.8 7.4 H20.2" stroke="#c9cdd0" stroke-width="1"/></svg>
<div class="a t" style="left:48px;top:670px;letter-spacing:0.162px;color:#fff;">Sprites</div>
<div class="a" style="left:137px;top:592px;width:52px;height:51px;background:rgba(0,0,0,0.18);filter:blur(1.2px);"></div>
<svg class="a" style="left:138px;top:592px;" width="50.33" height="50.33" viewBox="0 0 64 64"><g>
<rect x="0" y="0" width="64" height="64" fill="#ff7a1c"/>
<path d="M22.3 18.7 L25.3 17.4 L25.6 8.6 L26.3 7.3 L26.9 8 L27.4 12 L26.6 20 L25.6 26 L24.4 31 L22.3 31 Z M8 13.5 L10 11.2 L10.6 14 L9.6 20 L8.4 25 L6 28 L5.1 27.2 L5.4 24.9 L6.7 21.6 L7.4 20 L7.7 16.7 Z M52.3 10.2 L53 8.6 L54.9 7.6 L54.6 12 L53.6 17 L52.3 16.7 Z M0 6.3 H2.8 V12.5 H1.8 V10 H0 Z M33.7 13.5 L39.6 8.6 L42.5 6.6 L40 11 L36 15 L34 17.6 L32.8 16.7 Z M39 14.8 H42 V16.4 H39 Z M62 6.3 L64 6 V14 L61 16 L59.5 11.9 L60.1 10.2 Z" fill="#e8620a"/>
<path d="M0 0 H64 V6 L62 6.3 L60.8 7 L60.1 10.2 L59.5 11.9 L58.8 13.5 L58.2 15.1 L57.5 16.7 L56.9 18.4 L55.6 20 L54.3 21.3 L53.6 20 L53.9 18.4 L54.6 16.7 L54.9 15.1 L55.6 13.5 L57.2 11.9 L57.5 10.2 L57.2 8.6 L54.9 7.6 L53 8.6 L52.3 10.2 L52.3 16.7 L50.7 18.4 L49.7 20 L48.4 21.6 L47.1 23.3 L46.1 24.9 L45.8 26.5 L44.2 28.1 L42.5 29 L41.6 27.8 L40.9 25.9 L41.9 23.3 L42.5 21.6 L43.5 20 L44.5 18.7 L44.5 7.9 L42.5 6.6 L39.6 8.6 L37.7 10.2 L35.4 11.9 L33.7 13.5 L33.1 15.1 L32.8 16.7 L34.4 18.4 L35 21.6 L36 24.9 L36 29.8 L35.5 33 L34.5 35 L34.5 39.2 L32 39.2 L32 35 L30.5 32 L29.5 29.8 L28.2 28.1 L27.2 26.5 L26.9 24.9 L27.9 23.3 L28.2 20 L28.2 13.5 L27.9 10.2 L26.9 8 L26.3 7.3 L25.6 8.6 L25.6 16.7 L25.3 17.4 L22.3 18.7 L22 20 L22.3 29.8 L23 32.7 L23 36 L22.3 39.2 L21.7 40.8 L20.4 42.5 L19.4 43.1 L18.1 42.5 L18.1 40.8 L17.8 39.2 L16.8 36 L15.5 32.7 L14.2 29.8 L13.9 28.1 L12.9 26.5 L11.9 24.9 L11.9 18.4 L12.9 16.7 L13.9 13.5 L14.2 11.2 L12.2 9.9 L10 11.2 L8 13.5 L7.7 16.7 L7.4 20 L6.7 21.6 L5.7 23.3 L5.4 24.9 L5.1 27.2 L4.4 26.5 L3.9 24.9 L2.8 21.6 L1.8 20.6 L1.8 12.5 L2.8 12.5 L2.8 6.3 L0 6.3 Z" fill="#22b14c" stroke="#178c3c" stroke-width="0.95" stroke-linejoin="round"/>
<path d="M3 1 H62 V5 L58 6 L56 10 L55.6 6.4 L50 6 L48.6 14 L47 20 L46.4 8 L45 5.4 L30 5.4 L30.4 22 L31.4 30 L29.6 22 L29 6 L24.4 5.6 L21 14 L20.6 36 L19.4 40 L19 30 L17 20 L15.6 9 L12 6 L6 6 L5 14 L4.6 22 L3.8 12 Z" fill="#25bd53" opacity="0.75"/>
<path d="M41.6 27.8 L40.9 25.9 L41.9 23.3 L43.5 20 L45 19 L46.4 20.6 L46.1 24.9 L45.8 26.5 L44.2 28.1 L42.5 29 Z M32 34 H34.5 V39.2 H32 Z M4.4 25.4 H6.4 V27.2 H4.4 Z" fill="#138a3e"/>
<g fill="none" stroke="#b4480a" stroke-width="1.25" stroke-linejoin="round" stroke-linecap="round">
<path d="M1.2 59 L2.8 56.5 L4.1 53.2 L4.8 50.9 L6.4 49.9 L8.3 49.3 L10 47.3 L10.6 45.4 L10.3 43.4 L11.3 40.8 L12.2 39.2 L13.6 38.7 M10.4 45.2 L13.6 46.7 L13.9 48.6 M6.7 38.9 L7 41.2 L9.3 41.5 L10.4 42.6"/>
<path d="M24.6 47.3 L25.3 49.3 L27.3 51.3 L29.5 49.6 L31.1 48.8 M27.4 51.3 L27.5 56.1 L29.2 57.4"/>
<path d="M39 39.9 L39 46.4 L41.9 46 L43.2 43.8 L45.1 42.5 L46.8 41.5 L46.8 37.3 L48 37.1 M39.2 40.6 L40.6 42.6 M45.8 43.6 L50.4 44.1 L50.7 45.1 M41.9 46.4 L42.5 49.3 L42.9 53.9 L41.6 55.8 L41.2 56.8"/>
<path d="M56.5 35 L55.6 38.6 L56.5 39.5 L56.5 42.8"/><circle cx="56.5" cy="33.6" r="1.3"/>
<path d="M58.8 61.7 L60.8 59.7 L62.4 58.7"/>
<path d="M8.4 32.2 L8.7 34 M60.8 18 L59.4 20.6 L57.9 23.3 M60 27.2 H62.7 M51.7 29.6 L54 30.6 M55.4 28.4 L57.2 31 M1.2 28.5 L3 29.4 L4.4 31 M9.7 26.5 V31.4 M37.3 18.7 V22.3 M37 32.6 L38 33.4"/>
</g>
</g></svg>
<svg class="a" style="left:187.33px;top:609.33px;" width="14.67" height="15.33" viewBox="0 0 22 23"><circle cx="11" cy="11.8" r="10" fill="rgba(0,0,0,0.25)"/><circle cx="11" cy="11" r="9.6" fill="#5c5c5c" stroke="#8a8a8a" stroke-width="1"/><path d="M8.2 6.6 L15.4 11 L8.2 15.4 Z" fill="#f4f4f4"/></svg>
<div class="a t" style="left:153.38px;top:650px;letter-spacing:0.754px;font-size:9.6px;">Turf</div>
<div class="a" style="left:114.87px;top:838px;width:902.6px;height:17.33px;background:#dedede;border-top:1px solid #9a9a9a;"></div>
<div class="a" style="left:947px;top:845.87px;width:55px;height:3.67px;border-radius:3px;background:linear-gradient(#6a6a6a,#8a8a8a);"></div>
<div class="a" style="left:974px;top:843px;width:9.67px;height:9.67px;border-radius:50%;background:linear-gradient(#f4f4f4,#c8c8c8);border:0.8px solid #5e5e5e;"></div>
<div class="a" style="left:0px;top:856px;width:1440px;height:21px;background:#a2a2a2;"></div>
<div class="a tab" style="left:1022px;top:32.8px;width:98px;height:15.87px;"></div>
<svg class="a" style="left:1030.67px;top:35.33px;" width="10" height="10" viewBox="0 0 15 15"><circle cx="7.5" cy="7.5" r="7.2" fill="#2e2e2e"/><rect x="6.3" y="2.6" width="2.4" height="2.2" fill="#f0f0f0"/><path d="M5.4 6.2 H8.7 V11 H10 V12.4 H5.2 V11 H6.5 V7.6 H5.4 Z" fill="#f0f0f0"/></svg>
<div class="a t" style="left:1045.8px;top:35px;letter-spacing:0.219px;">Inspector</div>
<div class="a t" style="left:1128.67px;top:34px;letter-spacing:0.201px;color:#2a2a2a;">Services</div>
<svg class="a" style="left:1408px;top:37.33px;" width="8.67" height="10" viewBox="0 0 13 15"><path d="M2.6 7 V4.6 C2.6 0.6 8.4 0.6 8.4 4.6" fill="none" stroke="#6a6a6a" stroke-width="1.3"/><rect x="0.6" y="7" width="10.6" height="7.4" rx="0.8" fill="#454545"/></svg>
<svg class="a" style="left:1421.2px;top:41.47px;" width="14" height="5.33" viewBox="0 0 21 8"><path d="M0 1.2 H6.6 L3.3 5.2 Z" fill="#4a4a4a"/><g fill="#4a4a4a"><rect x="9" y="0" width="12" height="1.5"/><rect x="9" y="3" width="12" height="1.5"/><rect x="9" y="6" width="12" height="1.5"/></g></svg>
<div class="a" style="left:1020.8px;top:48.67px;width:419.2px;height:807px;background:#c2c2c2;border:1px solid #8a8a8a;box-shadow:inset -1px -1px 0 rgba(255,255,255,0.22);"></div>
<div class="a" style="left:1439.07px;top:48.67px;width:1.6px;height:807.33px;background:#9c9c9c;"></div>
<div class="a" style="left:1022px;top:49px;width:417px;height:48px;background:#dedede;"></div>
<div class="a" style="left:1022px;top:97px;width:417px;height:1px;background:#848484;"></div>
<svg class="a" style="left:1027.33px;top:55.33px;" width="24" height="24" viewBox="0 0 35 35"><defs><linearGradient id="gtop" x1="0" y1="0" x2="1" y2="0"><stop offset="0" stop-color="#d8d860"/><stop offset="0.5" stop-color="#8cc048"/><stop offset="1" stop-color="#58a840"/></linearGradient><linearGradient id="gl" x1="0" y1="0" x2="0.3" y2="1"><stop offset="0" stop-color="#7cc8ee"/><stop offset="1" stop-color="#2f8fd0"/></linearGradient><linearGradient id="gr" x1="0" y1="0" x2="0.4" y2="1"><stop offset="0" stop-color="#f07428"/><stop offset="1" stop-color="#d03c14"/></linearGradient></defs><path d="M2 7 L17 1.6 L33 7 L18 13.6 Z" fill="url(#gtop)"/><path d="M2 7 L18 13.6 V31 L4.4 24.4 Z" fill="url(#gl)"/><path d="M33 7 L18 13.6 V31 L31 23.4 Z" fill="url(#gr)"/><path d="M4 25.5 H16.6 L10.2 32.6 Z" fill="#222"/></svg>
<div class="a cbc" style="left:1065.2px;top:58px;width:11.8px;height:11.8px;"></div>
<svg class="a" style="left:1065.87px;top:57.2px;" width="12.33" height="11.87" viewBox="0 0 18.5 17.8"><path d="M3.4 9.6 L7.8 14.6 L16.2 2.6" fill="none" stroke="#0c0c0c" stroke-width="3" stroke-linejoin="miter"/></svg>
<div class="a fld" style="left:1083px;top:56px;width:283px;height:16px;"></div>
<div class="a t" style="left:1086.72px;top:57px;letter-spacing:0.542px;">Turf</div>
<div class="a cb" style="left:1371.33px;top:58px;width:11.8px;height:11.8px;"></div>
<div class="a t" style="left:1387.33px;top:57px;letter-spacing:0.175px;">Static</div>
<svg class="a" style="left:1424.33px;top:61px;" width="9.33" height="5.33" viewBox="0 0 14 8"><path d="M0 0 H14 L7 8 Z" fill="#333"/></svg>
<div class="a t" style="left:1057.39px;top:77px;letter-spacing:0.664px;">Tag</div>
<div class="a dd" style="left:1083px;top:76px;width:160px;height:15px;"></div>
<div class="a t s" style="left:1089.33px;top:76px;letter-spacing:0.056px;font-size:9.6px;">Untagged</div>
<svg class="a" style="left:1233.13px;top:79.73px;" width="3.73" height="7.33" viewBox="0 0 5.6 11"><path d="M0 4 L2.8 0 L5.6 4 Z M0 7 L2.8 11 L5.6 7 Z" fill="#333"/></svg>
<div class="a t" style="left:1249.33px;top:77px;letter-spacing:0.244px;">Layer</div>
<div class="a dd" style="left:1288px;top:76px;width:147px;height:15px;"></div>
<div class="a t s" style="left:1294px;top:76px;letter-spacing:0.152px;font-size:9.6px;">Default</div>
<svg class="a" style="left:1425.47px;top:79.73px;" width="3.73" height="7.33" viewBox="0 0 5.6 11"><path d="M0 4 L2.8 0 L5.6 4 Z M0 7 L2.8 11 L5.6 7 Z" fill="#333"/></svg>
<svg class="a" style="left:1026.13px;top:104.47px;" width="9" height="7.33" viewBox="0 0 13.5 11"><path d="M0 0 H13.5 L6.75 11 Z" fill="#6e6e6e"/></svg>
<div class="a t b" style="left:1071.6px;top:101px;letter-spacing:0.506px;">Transform</div>
<svg class="a" style="left:1406.8px;top:99.87px;" width="13.6" height="14.27" viewBox="0 0 20.4 21.4"><defs><linearGradient id="bk" x1="0.2" y1="0" x2="0.6" y2="1"><stop offset="0" stop-color="#9ab8e0"/><stop offset="0.5" stop-color="#6287bc"/><stop offset="1" stop-color="#2f4c80"/></linearGradient></defs><path d="M0.6 3.2 L2.8 0.6 H19.8 V18.8 L17.2 21 H3 L0.6 19.2 Z" fill="#2a4170"/><path d="M3.4 2.2 H18.8 V18.4 L17.4 19.4 V4.6 H3.4 Z" fill="#f4f6fa"/><path d="M0.7 3.4 L4 4.8 V20.8 L0.7 19 Z" fill="#3e5c94"/><rect x="4" y="4.8" width="12.9" height="16" fill="url(#bk)"/></svg>
<div class="a t b" style="left:1412px;top:102.67px;font-size:7.4px;line-height:12px;color:rgba(222,232,248,0.78);">?</div>
<svg class="a" style="left:1425.47px;top:101.4px;" width="10.27" height="10.27" viewBox="0 0 16 16"><g fill="#1c1c1c"><rect x="6.4" y="0.4" width="3.2" height="15.2" rx="1.1" transform="rotate(0 8 8)"/><rect x="6.4" y="0.4" width="3.2" height="15.2" rx="1.1" transform="rotate(45 8 8)"/><rect x="6.4" y="0.4" width="3.2" height="15.2" rx="1.1" transform="rotate(90 8 8)"/><rect x="6.4" y="0.4" width="3.2" height="15.2" rx="1.1" transform="rotate(135 8 8)"/><circle cx="8" cy="8" r="5.7"/></g><circle cx="8" cy="8" r="2.6" fill="#c6c6c6"/></svg>
<svg class="a" style="left:1435.4px;top:109.73px;" width="3.07" height="3.07" viewBox="0 0 4.6 4.6"><path d="M0 0 H4.6 L2.3 4.6 Z" fill="#1c1c1c"/></svg>
<svg class="a" style="left:1037.33px;top:100.67px;" width="15.33" height="13.33" viewBox="0 0 23 20"><g stroke-width="3.1" stroke-linecap="butt" fill="none"><path d="M2.4 16.8 L11.4 11.6" stroke="#2c98e0"/><path d="M11.4 11.6 L20.6 16.8" stroke="#e02828"/><path d="M11.6 12.4 V1.4" stroke="#8cd820"/></g></svg>
<div class="a t" style="left:1037.07px;top:117px;letter-spacing:0.083px;">Position</div>
<div class="a t" style="left:1185.2px;top:117px;">X</div>
<div class="a fld" style="left:1196px;top:116px;width:70px;height:16px;"></div>
<div class="a t" style="left:1199.33px;top:117px;letter-spacing:0.118px;">-3.49</div>
<div class="a t" style="left:1270.03px;top:117px;">Y</div>
<div class="a fld" style="left:1281px;top:116px;width:70px;height:16px;"></div>
<div class="a t" style="left:1284.33px;top:117px;letter-spacing:-0.245px;">0.5</div>
<div class="a t" style="left:1355.67px;top:117px;">Z</div>
<div class="a fld" style="left:1366px;top:116px;width:70px;height:16px;"></div>
<div class="a t" style="left:1369.67px;top:117px;">0</div>
<div class="a t" style="left:1037.07px;top:135px;letter-spacing:0.056px;">Rotation</div>
<div class="a t" style="left:1185.2px;top:135px;">X</div>
<div class="a fld" style="left:1196px;top:134px;width:70px;height:16px;"></div>
<div class="a t" style="left:1199.33px;top:135px;">0</div>
<div class="a t" style="left:1270.03px;top:135px;">Y</div>
<div class="a fld" style="left:1281px;top:134px;width:70px;height:16px;"></div>
<div class="a t" style="left:1284.33px;top:135px;">0</div>
<div class="a t" style="left:1355.67px;top:135px;">Z</div>
<div class="a fld" style="left:1366px;top:134px;width:70px;height:16px;"></div>
<div class="a t" style="left:1369.67px;top:135px;">0</div>
<div class="a t" style="left:1037.07px;top:153px;letter-spacing:0.153px;">Scale</div>
<div class="a t" style="left:1185.2px;top:153px;">X</div>
<div class="a fld" style="left:1196px;top:152px;width:70px;height:16px;"></div>
<div class="a t" style="left:1199.33px;top:153px;">1</div>
<div class="a t" style="left:1270.03px;top:153px;">Y</div>
<div class="a fld" style="left:1281px;top:152px;width:70px;height:16px;"></div>
<div class="a t" style="left:1284.33px;top:153px;">1</div>
<div class="a t" style="left:1355.67px;top:153px;">Z</div>
<div class="a fld" style="left:1366px;top:152px;width:70px;height:16px;"></div>
<div class="a t" style="left:1369.67px;top:153px;">1</div>
<div class="a" style="left:1022px;top:172px;width:417px;height:1px;background:#848484;"></div>
<div class="a" style="left:1022px;top:173px;width:417px;height:1px;background:#cdcdcd;"></div>
<svg class="a" style="left:1026.13px;top:179.47px;" width="9" height="7.33" viewBox="0 0 13.5 11"><path d="M0 0 H13.5 L6.75 11 Z" fill="#6e6e6e"/></svg>
<div class="a cbc" style="left:1056.4px;top:176.6px;width:11.8px;height:11.8px;"></div>
<svg class="a" style="left:1057.07px;top:175.8px;" width="12.33" height="11.87" viewBox="0 0 18.5 17.8"><path d="M3.4 9.6 L7.8 14.6 L16.2 2.6" fill="none" stroke="#0c0c0c" stroke-width="3" stroke-linejoin="miter"/></svg>
<div class="a t b" style="left:1071.6px;top:176px;letter-spacing:0.271px;">Sprite Renderer</div>
<svg class="a" style="left:1406.8px;top:174.87px;" width="13.6" height="14.27" viewBox="0 0 20.4 21.4"><defs><linearGradient id="bk" x1="0.2" y1="0" x2="0.6" y2="1"><stop offset="0" stop-color="#9ab8e0"/><stop offset="0.5" stop-color="#6287bc"/><stop offset="1" stop-color="#2f4c80"/></linearGradient></defs><path d="M0.6 3.2 L2.8 0.6 H19.8 V18.8 L17.2 21 H3 L0.6 19.2 Z" fill="#2a4170"/><path d="M3.4 2.2 H18.8 V18.4 L17.4 19.4 V4.6 H3.4 Z" fill="#f4f6fa"/><path d="M0.7 3.4 L4 4.8 V20.8 L0.7 19 Z" fill="#3e5c94"/><rect x="4" y="4.8" width="12.9" height="16" fill="url(#bk)"/></svg>
<div class="a t b" style="left:1412px;top:177.67px;font-size:7.4px;line-height:12px;color:rgba(222,232,248,0.78);">?</div>
<svg class="a" style="left:1425.47px;top:176.4px;" width="10.27" height="10.27" viewBox="0 0 16 16"><g fill="#1c1c1c"><rect x="6.4" y="0.4" width="3.2" height="15.2" rx="1.1" transform="rotate(0 8 8)"/><rect x="6.4" y="0.4" width="3.2" height="15.2" rx="1.1" transform="rotate(45 8 8)"/><rect x="6.4" y="0.4" width="3.2" height="15.2" rx="1.1" transform="rotate(90 8 8)"/><rect x="6.4" y="0.4" width="3.2" height="15.2" rx="1.1" transform="rotate(135 8 8)"/><circle cx="8" cy="8" r="5.7"/></g><circle cx="8" cy="8" r="2.6" fill="#c6c6c6"/></svg>
<svg class="a" style="left:1435.4px;top:184.73px;" width="3.07" height="3.07" viewBox="0 0 4.6 4.6"><path d="M0 0 H4.6 L2.3 4.6 Z" fill="#1c1c1c"/></svg>
<svg class="a" style="left:1038px;top:175.33px;" width="14.67" height="14.67" viewBox="0 0 22 22"><rect x="1" y="1" width="19" height="19" rx="2" fill="#d8d8d8" stroke="#8a8a8a" stroke-width="1"/><circle cx="10" cy="9" r="4.2" fill="#c4d4e8" stroke="#7a8aa0" stroke-width="1.2"/><path d="M6 16.4 H14" stroke="#9a9a9a" stroke-width="1.2"/><ellipse cx="16.6" cy="18.6" rx="4.4" ry="2.6" fill="#fff" stroke="#6a6a6a" stroke-width="0.8"/><circle cx="16.6" cy="18.6" r="1.3" fill="#333"/></svg>
<div class="a t" style="left:1037.07px;top:192px;letter-spacing:0.104px;">Sprite</div>
<div class="a fld" style="left:1184px;top:191px;width:234px;height:16px;"></div>
<div class="a t" style="left:1200.66px;top:192px;letter-spacing:0.586px;">Turf</div>
<svg class="a" style="left:1187.33px;top:193.33px;" width="12" height="12" viewBox="0 0 18 18"><rect x="3" y="3" width="12" height="12" fill="#d4d8dc" stroke="#a4acb6" stroke-width="1.6"/><g fill="#7a9fc6"><rect x="0.5" y="0.5" width="4.4" height="4.4" rx="1"/><rect x="13.1" y="0.5" width="4.4" height="4.4" rx="1"/><rect x="0.5" y="13.1" width="4.4" height="4.4" rx="1"/><rect x="13.1" y="13.1" width="4.4" height="4.4" rx="1"/></g><circle cx="9" cy="9" r="2.8" fill="#a9bccf" stroke="#9aaabb" stroke-width="0.6"/></svg>
<svg class="a" style="left:1424.33px;top:194.33px;" width="9.33" height="9.33" viewBox="0 0 14 14"><circle cx="7" cy="7" r="5.4" fill="none" stroke="#3c3c3c" stroke-width="1.2"/><circle cx="7" cy="7" r="1.7" fill="#3c3c3c"/></svg>
<div class="a t" style="left:1037.07px;top:210px;letter-spacing:0.549px;">Color</div>
<div class="a fld" style="left:1184px;top:209px;width:234px;height:16px;background:#fff;border-color:#5a5a5a;box-shadow:none;"></div>
<svg class="a" style="left:1420.67px;top:209.33px;" width="14.67" height="16" viewBox="0 0 23 24"><path d="M2 22 L3.2 17.6 L13.4 7.4 L16.6 10.6 L6.4 20.8 Z" fill="#e8e8e8" stroke="#333" stroke-width="1.2" stroke-linejoin="round"/><path d="M12.4 6 L18 11.6" stroke="#333" stroke-width="2.2"/><path d="M14.6 7 L18.4 2.6 C19.6 1.4 22 3.6 20.8 5 L17 9.4 Z" fill="#333"/></svg>
<div class="a t" style="left:1037.07px;top:228px;letter-spacing:-0.427px;">Flip</div>
<div class="a cb" style="left:1185.2px;top:229px;width:11.8px;height:11.8px;"></div>
<div class="a t" style="left:1201px;top:228px;">X</div>
<div class="a cb" style="left:1214.87px;top:229px;width:11.8px;height:11.8px;"></div>
<div class="a t" style="left:1230.89px;top:228px;">Y</div>
<div class="a t" style="left:1037.07px;top:246px;letter-spacing:-0.041px;">Material</div>
<div class="a fld" style="left:1184px;top:245px;width:234px;height:16px;"></div>
<div class="a t" style="left:1200.6px;top:246px;letter-spacing:0.200px;">Sprites-Default</div>
<svg class="a" style="left:1187.67px;top:247.67px;" width="11" height="11" viewBox="0 0 16.5 16.5"><defs><radialGradient id="sph" cx="0.35" cy="0.3" r="0.8"><stop offset="0" stop-color="#cfe2f8"/><stop offset="0.45" stop-color="#5e8fd0"/><stop offset="1" stop-color="#274a86"/></radialGradient></defs><circle cx="8.2" cy="8.2" r="7.8" fill="url(#sph)"/></svg>
<svg class="a" style="left:1424.33px;top:248.33px;" width="9.33" height="9.33" viewBox="0 0 14 14"><circle cx="7" cy="7" r="5.4" fill="none" stroke="#3c3c3c" stroke-width="1.2"/><circle cx="7" cy="7" r="1.7" fill="#3c3c3c"/></svg>
<div class="a t" style="left:1037.07px;top:270px;letter-spacing:0.273px;">Sorting Layer</div>
<div class="a dd" style="left:1184px;top:269px;width:252px;height:15px;"></div>
<div class="a t s" style="left:1190.53px;top:269px;letter-spacing:0.074px;font-size:9.6px;">Default</div>
<svg class="a" style="left:1426.13px;top:272.73px;" width="3.73" height="7.33" viewBox="0 0 5.6 11"><path d="M0 4 L2.8 0 L5.6 4 Z M0 7 L2.8 11 L5.6 7 Z" fill="#333"/></svg>
<div class="a t" style="left:1037.07px;top:288px;letter-spacing:0.306px;">Order in Layer</div>
<div class="a fld" style="left:1184px;top:287px;width:252px;height:16px;"></div>
<div class="a t" style="left:1187.53px;top:288px;">0</div>
<div class="a" style="left:1022px;top:307px;width:417px;height:1px;background:#848484;"></div>
<div class="a" style="left:1022px;top:308px;width:417px;height:1px;background:#cdcdcd;"></div>
<svg class="a" style="left:1026.13px;top:314.47px;" width="9" height="7.33" viewBox="0 0 13.5 11"><path d="M0 0 H13.5 L6.75 11 Z" fill="#6e6e6e"/></svg>
<div class="a cbc" style="left:1056.4px;top:311.6px;width:11.8px;height:11.8px;"></div>
<svg class="a" style="left:1057.07px;top:310.8px;" width="12.33" height="11.87" viewBox="0 0 18.5 17.8"><path d="M3.4 9.6 L7.8 14.6 L16.2 2.6" fill="none" stroke="#0c0c0c" stroke-width="3" stroke-linejoin="miter"/></svg>
<div class="a t b" style="left:1071.6px;top:311px;letter-spacing:0.183px;">Box Collider 2D</div>
<svg class="a" style="left:1406.8px;top:309.87px;" width="13.6" height="14.27" viewBox="0 0 20.4 21.4"><defs><linearGradient id="bk" x1="0.2" y1="0" x2="0.6" y2="1"><stop offset="0" stop-color="#9ab8e0"/><stop offset="0.5" stop-color="#6287bc"/><stop offset="1" stop-color="#2f4c80"/></linearGradient></defs><path d="M0.6 3.2 L2.8 0.6 H19.8 V18.8 L17.2 21 H3 L0.6 19.2 Z" fill="#2a4170"/><path d="M3.4 2.2 H18.8 V18.4 L17.4 19.4 V4.6 H3.4 Z" fill="#f4f6fa"/><path d="M0.7 3.4 L4 4.8 V20.8 L0.7 19 Z" fill="#3e5c94"/><rect x="4" y="4.8" width="12.9" height="16" fill="url(#bk)"/></svg>
<div class="a t b" style="left:1412px;top:312.67px;font-size:7.4px;line-height:12px;color:rgba(222,232,248,0.78);">?</div>
<svg class="a" style="left:1425.47px;top:311.4px;" width="10.27" height="10.27" viewBox="0 0 16 16"><g fill="#1c1c1c"><rect x="6.4" y="0.4" width="3.2" height="15.2" rx="1.1" transform="rotate(0 8 8)"/><rect x="6.4" y="0.4" width="3.2" height="15.2" rx="1.1" transform="rotate(45 8 8)"/><rect x="6.4" y="0.4" width="3.2" height="15.2" rx="1.1" transform="rotate(90 8 8)"/><rect x="6.4" y="0.4" width="3.2" height="15.2" rx="1.1" transform="rotate(135 8 8)"/><circle cx="8" cy="8" r="5.7"/></g><circle cx="8" cy="8" r="2.6" fill="#c6c6c6"/></svg>
<svg class="a" style="left:1435.4px;top:319.73px;" width="3.07" height="3.07" viewBox="0 0 4.6 4.6"><path d="M0 0 H4.6 L2.3 4.6 Z" fill="#1c1c1c"/></svg>
<div class="a" style="left:1038px;top:310px;width:14px;height:14px;background:#4e4e4e;border:1.3px solid #8fd43c;"></div>
<div class="a" style="left:1184px;top:327px;width:33px;height:22px;border-radius:3.5px;border:1px solid #555;background:linear-gradient(#f8f8f8,#e6e6e6 50%,#cfcfcf);"></div>
<svg class="a" style="left:1192.67px;top:331.33px;" width="16" height="13.33" viewBox="0 0 24 20"><g fill="none" stroke="#222" stroke-width="1.4"><path d="M4 15 L9.6 5 M14.6 5 L19.4 13"/><path d="M9.4 3 H14.8"/><rect x="8.4" y="1" width="3.2" height="3.6" fill="#eee"/><rect x="12.8" y="1" width="3.2" height="3.6" fill="#eee"/><rect x="1.4" y="14.6" width="4.6" height="4.6" fill="#eee"/><rect x="17.4" y="12" width="4.6" height="4.6" fill="#eee"/></g></svg>
<div class="a t" style="left:1224.27px;top:331px;letter-spacing:0.162px;">Edit Collider</div>
<div class="a t" style="left:1037.07px;top:352px;letter-spacing:-0.041px;">Material</div>
<div class="a fld" style="left:1184px;top:351px;width:234px;height:16px;"></div>
<div class="a t" style="left:1187.53px;top:352px;letter-spacing:0.165px;">None (Physics Material 2D)</div>
<svg class="a" style="left:1424.33px;top:354.33px;" width="9.33" height="9.33" viewBox="0 0 14 14"><circle cx="7" cy="7" r="5.4" fill="none" stroke="#3c3c3c" stroke-width="1.2"/><circle cx="7" cy="7" r="1.7" fill="#3c3c3c"/></svg>
<div class="a t" style="left:1037.07px;top:370px;letter-spacing:0.604px;">Is Trigger</div>
<div class="a cb" style="left:1185.2px;top:371px;width:11.8px;height:11.8px;"></div>
<div class="a t" style="left:1037.07px;top:388px;letter-spacing:0.219px;">Used By Effector</div>
<div class="a cbc" style="left:1185.2px;top:389px;width:11.8px;height:11.8px;"></div>
<svg class="a" style="left:1185.87px;top:388.2px;" width="12.33" height="11.87" viewBox="0 0 18.5 17.8"><path d="M3.4 9.6 L7.8 14.6 L16.2 2.6" fill="none" stroke="#0c0c0c" stroke-width="3" stroke-linejoin="miter"/></svg>
<div class="a t" style="left:1037.07px;top:406px;letter-spacing:0.176px;">Offset</div>
<div class="a t" style="left:1185.2px;top:406px;">X</div>
<div class="a fld" style="left:1196px;top:405px;width:70px;height:16px;"></div>
<div class="a t" style="left:1199.33px;top:406px;">0</div>
<div class="a t" style="left:1270.03px;top:406px;">Y</div>
<div class="a fld" style="left:1281px;top:405px;width:70px;height:16px;"></div>
<div class="a t" style="left:1284.33px;top:406px;">0</div>
<div class="a t" style="left:1037.07px;top:424px;letter-spacing:0.163px;">Size</div>
<div class="a t" style="left:1185.2px;top:424px;">X</div>
<div class="a fld" style="left:1196px;top:423px;width:70px;height:16px;"></div>
<div class="a t" style="left:1199.33px;top:424px;">1</div>
<div class="a t" style="left:1270.03px;top:424px;">Y</div>
<div class="a fld" style="left:1281px;top:423px;width:70px;height:16px;"></div>
<div class="a t" style="left:1284.33px;top:424px;">1</div>
<svg class="a" style="left:1026.2px;top:444.6px;" width="7.33" height="9" viewBox="0 0 11 13.5"><path d="M0 0 L11 6.75 L0 13.5 Z" fill="#6e6e6e"/></svg>
<div class="a t" style="left:1037.07px;top:442px;letter-spacing:0.416px;">Info</div>
<div class="a" style="left:1022px;top:461px;width:417px;height:1px;background:#848484;"></div>
<div class="a" style="left:1022px;top:462px;width:417px;height:1px;background:#cdcdcd;"></div>
<svg class="a" style="left:1026.13px;top:468.47px;" width="9" height="7.33" viewBox="0 0 13.5 11"><path d="M0 0 H13.5 L6.75 11 Z" fill="#6e6e6e"/></svg>
<div class="a cbc" style="left:1056.4px;top:465.6px;width:11.8px;height:11.8px;"></div>
<svg class="a" style="left:1057.07px;top:464.8px;" width="12.33" height="11.87" viewBox="0 0 18.5 17.8"><path d="M3.4 9.6 L7.8 14.6 L16.2 2.6" fill="none" stroke="#0c0c0c" stroke-width="3" stroke-linejoin="miter"/></svg>
<div class="a t b" style="left:1071.6px;top:465px;letter-spacing:0.237px;">Platform Effector 2D</div>
<svg class="a" style="left:1406.8px;top:463.87px;" width="13.6" height="14.27" viewBox="0 0 20.4 21.4"><defs><linearGradient id="bk" x1="0.2" y1="0" x2="0.6" y2="1"><stop offset="0" stop-color="#9ab8e0"/><stop offset="0.5" stop-color="#6287bc"/><stop offset="1" stop-color="#2f4c80"/></linearGradient></defs><path d="M0.6 3.2 L2.8 0.6 H19.8 V18.8 L17.2 21 H3 L0.6 19.2 Z" fill="#2a4170"/><path d="M3.4 2.2 H18.8 V18.4 L17.4 19.4 V4.6 H3.4 Z" fill="#f4f6fa"/><path d="M0.7 3.4 L4 4.8 V20.8 L0.7 19 Z" fill="#3e5c94"/><rect x="4" y="4.8" width="12.9" height="16" fill="url(#bk)"/></svg>
<div class="a t b" style="left:1412px;top:466.67px;font-size:7.4px;line-height:12px;color:rgba(222,232,248,0.78);">?</div>
<svg class="a" style="left:1425.47px;top:465.4px;" width="10.27" height="10.27" viewBox="0 0 16 16"><g fill="#1c1c1c"><rect x="6.4" y="0.4" width="3.2" height="15.2" rx="1.1" transform="rotate(0 8 8)"/><rect x="6.4" y="0.4" width="3.2" height="15.2" rx="1.1" transform="rotate(45 8 8)"/><rect x="6.4" y="0.4" width="3.2" height="15.2" rx="1.1" transform="rotate(90 8 8)"/><rect x="6.4" y="0.4" width="3.2" height="15.2" rx="1.1" transform="rotate(135 8 8)"/><circle cx="8" cy="8" r="5.7"/></g><circle cx="8" cy="8" r="2.6" fill="#c6c6c6"/></svg>
<svg class="a" style="left:1435.4px;top:473.73px;" width="3.07" height="3.07" viewBox="0 0 4.6 4.6"><path d="M0 0 H4.6 L2.3 4.6 Z" fill="#1c1c1c"/></svg>
<svg class="a" style="left:1037.33px;top:463.33px;" width="16" height="16" viewBox="0 0 24 24"><path d="M6 15 V10 C6 2 18 2 18 10 V15" fill="none" stroke="#9a9a9a" stroke-width="1.6"/><path d="M14.6 4.4 L18.6 2.6 L18 7" fill="#9a9a9a"/><rect x="1" y="16" width="22" height="3.4" fill="#8fd43c"/><rect x="4" y="20" width="16" height="1.6" fill="#a8a8a8"/></svg>
<div class="a t" style="left:1037.07px;top:481px;letter-spacing:0.187px;">Use Collider Mask</div>
<div class="a cbc" style="left:1185.2px;top:482px;width:11.8px;height:11.8px;"></div>
<svg class="a" style="left:1185.87px;top:481.2px;" width="12.33" height="11.87" viewBox="0 0 18.5 17.8"><path d="M3.4 9.6 L7.8 14.6 L16.2 2.6" fill="none" stroke="#0c0c0c" stroke-width="3" stroke-linejoin="miter"/></svg>
<div class="a t" style="left:1037.07px;top:499px;letter-spacing:0.161px;">Collider Mask</div>
<div class="a dd" style="left:1184px;top:498px;width:252px;height:15px;"></div>
<div class="a t s" style="left:1190.53px;top:498px;letter-spacing:0.105px;font-size:9.6px;">Everything</div>
<svg class="a" style="left:1426.13px;top:501.73px;" width="3.73" height="7.33" viewBox="0 0 5.6 11"><path d="M0 4 L2.8 0 L5.6 4 Z M0 7 L2.8 11 L5.6 7 Z" fill="#333"/></svg>
<div class="a t" style="left:1037.07px;top:517px;letter-spacing:0.153px;">Rotational Offset</div>
<div class="a fld" style="left:1184px;top:516px;width:252px;height:16px;"></div>
<div class="a t" style="left:1187.53px;top:517px;">0</div>
<svg class="a" style="left:1025.2px;top:538.47px;" width="9" height="7.33" viewBox="0 0 13.5 11"><path d="M0 0 H13.5 L6.75 11 Z" fill="#6e6e6e"/></svg>
<div class="a t" style="left:1037.07px;top:535px;letter-spacing:0.271px;">One Way</div>
<div class="a t" style="left:1037.07px;top:553px;letter-spacing:0.263px;">Use One Way</div>
<div class="a cb" style="left:1185.2px;top:554px;width:11.8px;height:11.8px;"></div>
<div class="a t" style="left:1037.07px;top:571px;letter-spacing:0.259px;">Use One Way Grouping</div>
<div class="a cb" style="left:1185.2px;top:572px;width:11.8px;height:11.8px;"></div>
<div class="a t" style="left:1037.07px;top:589px;letter-spacing:0.388px;">Surface Arc</div>
<div class="a fld" style="left:1184px;top:588px;width:252px;height:16px;"></div>
<div class="a t" style="left:1187.53px;top:589px;letter-spacing:-0.605px;">180</div>
<svg class="a" style="left:1025.2px;top:618.47px;" width="9" height="7.33" viewBox="0 0 13.5 11"><path d="M0 0 H13.5 L6.75 11 Z" fill="#6e6e6e"/></svg>
<div class="a t" style="left:1037.07px;top:615px;letter-spacing:0.123px;">Sides</div>
<div class="a t" style="left:1037.07px;top:633px;letter-spacing:0.178px;">Use Side Friction</div>
<div class="a cb" style="left:1185.2px;top:634px;width:11.8px;height:11.8px;"></div>
<div class="a t" style="left:1037.07px;top:651px;letter-spacing:0.202px;">Use Side Bounce</div>
<div class="a cb" style="left:1185.2px;top:652px;width:11.8px;height:11.8px;"></div>
<div class="a t" style="left:1037.07px;top:669px;letter-spacing:0.382px;">Side Arc</div>
<div class="a fld" style="left:1184px;top:668px;width:252px;height:16px;"></div>
<div class="a t" style="left:1187.53px;top:669px;">1</div>
<div class="a" style="left:1022px;top:692px;width:417px;height:1px;background:#7e7e7e;"></div>
<div class="a" style="left:1022px;top:693px;width:417px;height:44px;background:linear-gradient(#d6d6d6,#e0e0e0);"></div>
<div class="a" style="left:1022px;top:737px;width:417px;height:4px;background:#c6c6c6;"></div>
<div class="a" style="left:1022px;top:741px;width:417px;height:1px;background:#8a8a8a;"></div>
<div class="a" style="left:1037px;top:698px;width:32px;height:32px;background:#dcdcdc;"></div>
<div class="a" style="left:1041px;top:702px;width:24px;height:24px;background:#fff;"></div>
<svg class="a" style="left:1026.67px;top:723px;" width="8.33" height="9.33" viewBox="0 0 12.5 14"><path d="M0 0 L12.5 7 L0 14 Z" fill="#6a6a6a"/></svg>
<div class="a t" style="left:1077.53px;top:697px;letter-spacing:0.241px;font-size:12px;line-height:18px;">Sprites-Default</div>
<svg class="a" style="left:1405.33px;top:698.47px;" width="13.6" height="14.27" viewBox="0 0 20.4 21.4"><defs><linearGradient id="bk" x1="0.2" y1="0" x2="0.6" y2="1"><stop offset="0" stop-color="#9ab8e0"/><stop offset="0.5" stop-color="#6287bc"/><stop offset="1" stop-color="#2f4c80"/></linearGradient></defs><path d="M0.6 3.2 L2.8 0.6 H19.8 V18.8 L17.2 21 H3 L0.6 19.2 Z" fill="#2a4170"/><path d="M3.4 2.2 H18.8 V18.4 L17.4 19.4 V4.6 H3.4 Z" fill="#f4f6fa"/><path d="M0.7 3.4 L4 4.8 V20.8 L0.7 19 Z" fill="#3e5c94"/><rect x="4" y="4.8" width="12.9" height="16" fill="url(#bk)"/></svg>
<div class="a t b" style="left:1410.53px;top:701.27px;font-size:7.4px;line-height:12px;color:rgba(222,232,248,0.78);">?</div>
<svg class="a" style="left:1424px;top:700px;" width="10.27" height="10.27" viewBox="0 0 16 16"><g fill="#1c1c1c"><rect x="6.4" y="0.4" width="3.2" height="15.2" rx="1.1" transform="rotate(0 8 8)"/><rect x="6.4" y="0.4" width="3.2" height="15.2" rx="1.1" transform="rotate(45 8 8)"/><rect x="6.4" y="0.4" width="3.2" height="15.2" rx="1.1" transform="rotate(90 8 8)"/><rect x="6.4" y="0.4" width="3.2" height="15.2" rx="1.1" transform="rotate(135 8 8)"/><circle cx="8" cy="8" r="5.7"/></g><circle cx="8" cy="8" r="2.6" fill="#c6c6c6"/></svg>
<svg class="a" style="left:1433.93px;top:708.33px;" width="3.07" height="3.07" viewBox="0 0 4.6 4.6"><path d="M0 0 H4.6 L2.3 4.6 Z" fill="#1c1c1c"/></svg>
<div class="a t" style="left:1077.53px;top:716px;letter-spacing:-0.495px;font-size:12px;line-height:18px;color:#6e6e6e;">Shader</div>
<div class="a" style="left:1125px;top:717px;width:309px;height:15px;border-radius:3px;border:1px solid #a8a8a8;background:linear-gradient(#ececec,#dcdcdc);"></div>
<div class="a t s" style="left:1131.47px;top:717px;letter-spacing:0.263px;font-size:9.6px;color:#777;">Sprites/Default</div>
<svg class="a" style="left:1423.33px;top:723.33px;" width="4" height="2.67" viewBox="0 0 6 4"><path d="M0 0 H6 L3.0 4 Z" fill="#777"/></svg>
<div class="a" style="left:1113px;top:752px;width:230px;height:23px;border-radius:4px;border:1px solid #4a4a4a;background:linear-gradient(#fafafa,#ececec 45%,#c8c8c8);box-shadow:0 0.7px 0 rgba(255,255,255,0.4);"></div>
<div class="a t" style="left:1177.67px;top:754px;letter-spacing:0.384px;font-size:12px;line-height:18px;">Add Component</div>
<div class="a" style="left:0px;top:0px;width:0.67px;height:876.67px;background:rgba(0,0,0,0.13);"></div>

</div>
<div id="chrome">
<div class="a" style="left:0px;top:0px;width:2160px;height:65px;background:#fff;"></div>
<div class="a" style="left:0px;top:35px;width:720px;height:1px;background:#dcdcdc;"></div>
<svg class="a" style="left:2.5px;top:5px;" width="24" height="24" viewBox="0 0 24 24"><g fill="none" stroke="#111" stroke-width="2.7" stroke-linejoin="round" stroke-linecap="round"><path d="M2 12.3 L13.5 3.6 L21.3 2 L22.3 22.3 L14.3 20.8 Z" fill="#fff"/><path d="M2.5 12.3 H14.5 M14.5 12.3 L21 3 M14.5 12.3 L21.6 21.6"/></g></svg>
<div class="a t lb" style="left:31px;top:6px;letter-spacing:-0.127px;font-size:18px;line-height:26px;">Unity 5.5.0f3 Personal (64bit) - Untitled - Infinite Runner - PC, Mac &amp; Linux Standalone* &lt;DX11&gt;</div>
<svg class="a" style="left:1960px;top:0px;" width="200" height="35" viewBox="0 0 200 35"><g fill="none" stroke="#111" stroke-width="1.4"><path d="M16 16.5 H31.5"/><path d="M85.5 12.5 H96.5 V23.5 H85.5 Z"/><path d="M88.5 12.5 V9.5 H99.5 V20.5 H96.5"/><path d="M155 9 L171 25 M171 9 L155 25"/></g></svg>
<div class="a t lb" style="left:11px;top:37px;letter-spacing:-0.775px;font-size:18px;line-height:26px;">File</div>
<div class="a t lb" style="left:59px;top:37px;letter-spacing:-0.568px;font-size:18px;line-height:26px;">Edit</div>
<div class="a t lb" style="left:110px;top:37px;letter-spacing:-1.000px;font-size:18px;line-height:26px;">Assets</div>
<div class="a t lb" style="left:181px;top:37px;letter-spacing:-0.336px;font-size:18px;line-height:26px;">GameObject</div>
<div class="a t lb" style="left:300.7px;top:37px;letter-spacing:0.242px;font-size:18px;line-height:26px;">Component</div>
<div class="a t lb" style="left:417.3px;top:37px;letter-spacing:0.324px;font-size:18px;line-height:26px;">Window</div>
<div class="a t lb" style="left:504.7px;top:37px;letter-spacing:-0.245px;font-size:18px;line-height:26px;">Help</div>
<div class="a" style="left:0px;top:62px;width:2160px;height:3px;background:linear-gradient(#ffffff,#ececec);"></div>
<div class="a" style="left:0px;top:36px;width:1px;height:29px;background:#cdcdcd;"></div>

</div>
</body></html>
